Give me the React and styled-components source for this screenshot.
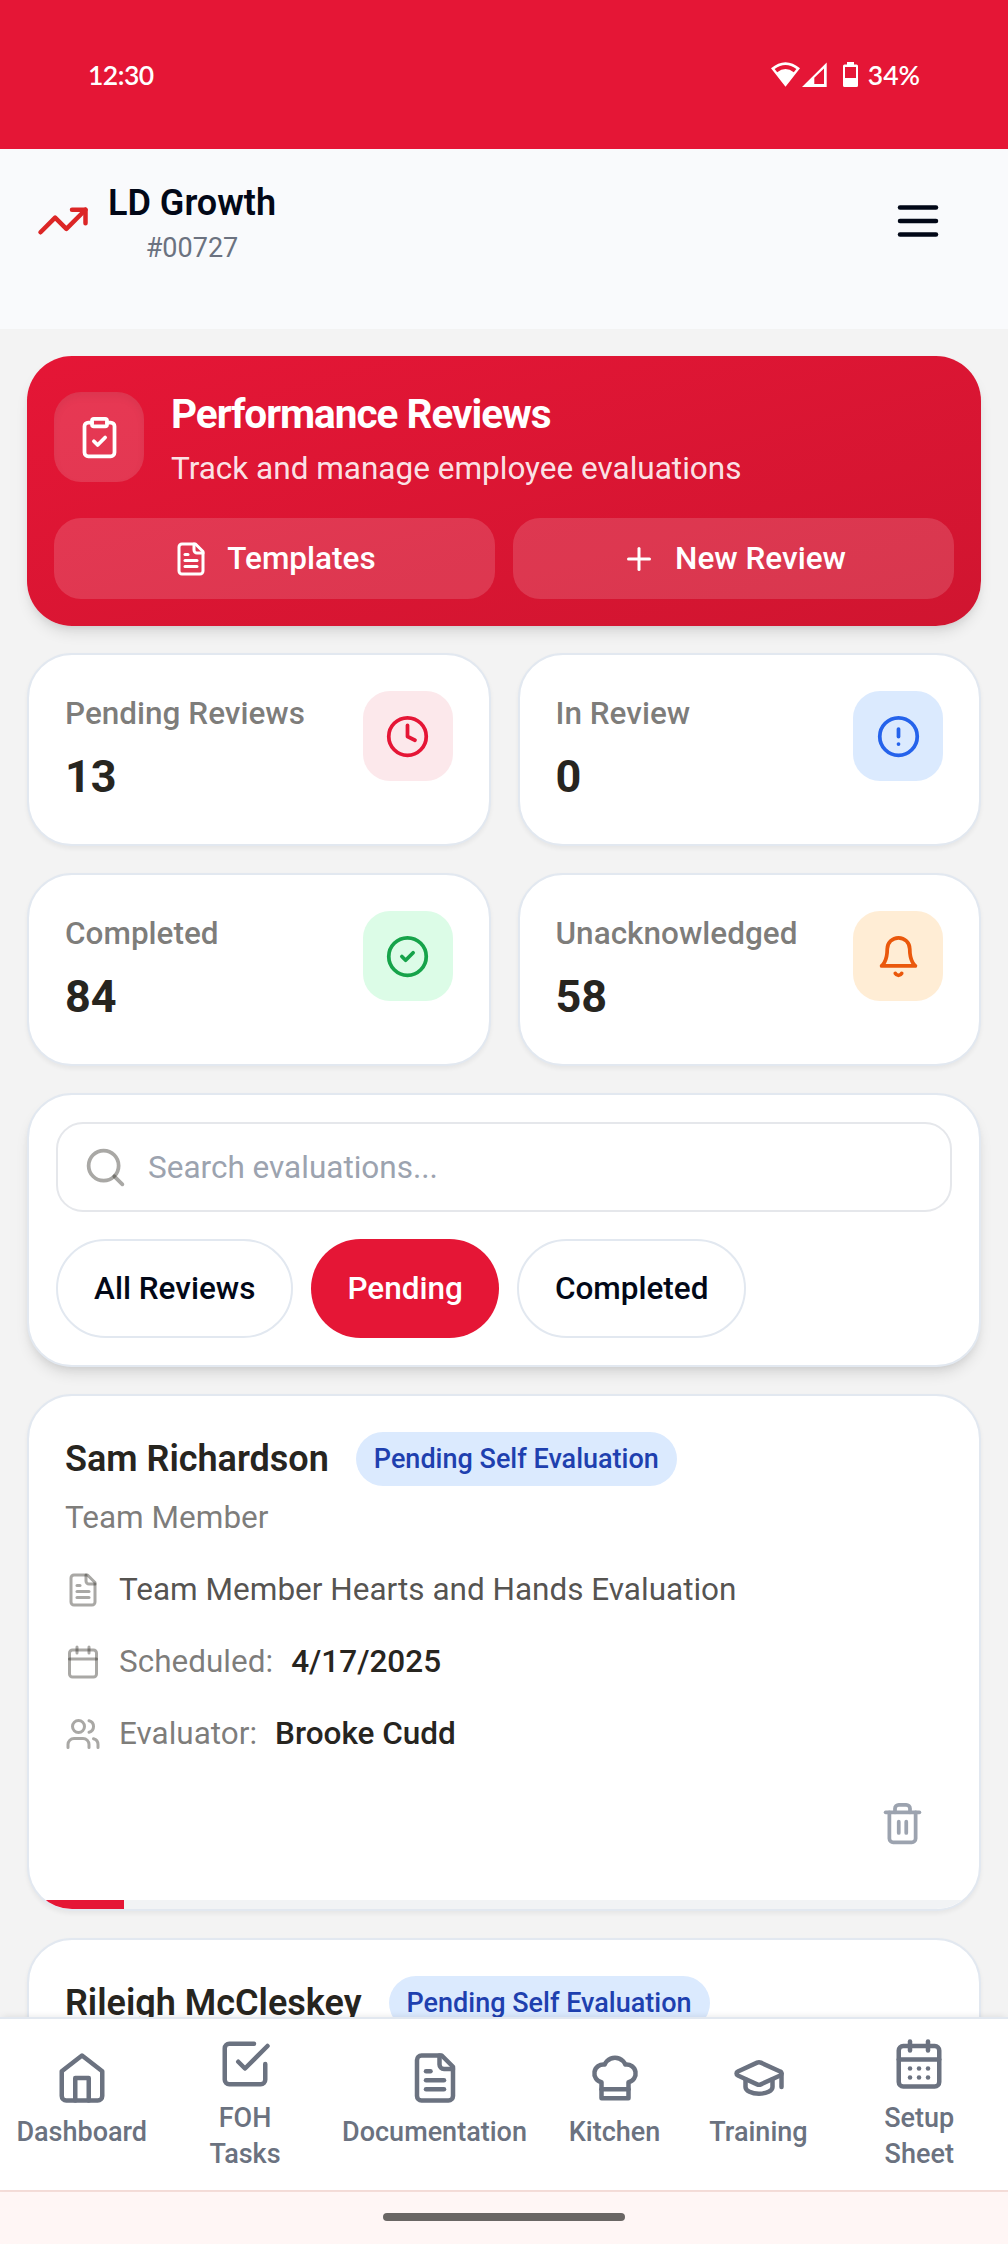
import React from "react";
import styled, { createGlobalStyle, css } from "styled-components";

const color = {
  brand: "#e51636",
  ink: "#27251f",
  ink80: "rgba(39, 37, 31, 0.8)",
  ink60: "rgba(39, 37, 31, 0.6)",
  ink40: "rgba(39, 37, 31, 0.4)",
  night: "#020817",
  line: "#e2e8f0",
  gray400: "#9ca3af",
  gray500: "#6b7280",
};

const GlobalStyle = createGlobalStyle`
  *, *::before, *::after { box-sizing: border-box; }
  html, body { margin: 0; padding: 0; }
  body {
    font-family: Roboto, "Liberation Sans", sans-serif;
    font-size: 31.5px;
    line-height: 45px;
    color: ${color.night};
    background: #f3f3f3;
  }
  button { font: inherit; color: inherit; background: none; border: 0; padding: 0; margin: 0; }
  h1, h2, h3, p { margin: 0; font: inherit; }
`;

/* ---------- icons ---------- */

const IconSvg = styled.svg`
  display: block;
  flex: none;
  width: ${(p) => p.$size}px;
  height: ${(p) => p.$size}px;
  fill: none;
  stroke: ${(p) => p.$stroke || "currentColor"};
  stroke-width: 2;
  stroke-linecap: round;
  stroke-linejoin: round;
`;

const shapes = {
  trending: (
    <>
      <polyline points="22 7 13.5 15.5 8.5 10.5 2 17" />
      <polyline points="16 7 22 7 22 13" />
    </>
  ),
  menu: (
    <>
      <path d="M4 6h16" />
      <path d="M4 12h16" />
      <path d="M4 18h16" />
    </>
  ),
  clipboardCheck: (
    <>
      <rect width="8" height="4" x="8" y="2" rx="1" />
      <path d="M16 4h2a2 2 0 0 1 2 2v14a2 2 0 0 1-2 2H6a2 2 0 0 1-2-2V6a2 2 0 0 1 2-2h2" />
      <path d="m9 14 2 2 4-4" />
    </>
  ),
  fileText: (
    <>
      <path d="M15 2H6a2 2 0 0 0-2 2v16a2 2 0 0 0 2 2h12a2 2 0 0 0 2-2V7Z" />
      <path d="M14 2v4a2 2 0 0 0 2 2h4" />
      <path d="M10 9H8" />
      <path d="M16 13H8" />
      <path d="M16 17H8" />
    </>
  ),
  plus: (
    <>
      <path d="M5 12h14" />
      <path d="M12 5v14" />
    </>
  ),
  clock: (
    <>
      <circle cx="12" cy="12" r="10" />
      <polyline points="12 6 12 12 16 14" />
    </>
  ),
  alert: (
    <>
      <circle cx="12" cy="12" r="10" />
      <path d="M12 8v4" />
      <path d="M12 16h.01" />
    </>
  ),
  circleCheck: (
    <>
      <circle cx="12" cy="12" r="10" />
      <path d="m9 12 2 2 4-4" />
    </>
  ),
  bell: (
    <>
      <path d="M6 8a6 6 0 0 1 12 0c0 7 3 9 3 9H3s3-2 3-9" />
      <path d="M10.3 21a1.94 1.94 0 0 0 3.4 0" />
    </>
  ),
  search: (
    <>
      <circle cx="11" cy="11" r="8" />
      <path d="m21 21-4.3-4.3" />
    </>
  ),
  calendar: (
    <>
      <path d="M8 2v4" />
      <path d="M16 2v4" />
      <rect width="18" height="18" x="3" y="4" rx="2" />
      <path d="M3 10h18" />
    </>
  ),
  calendarDays: (
    <>
      <path d="M8 2v4" />
      <path d="M16 2v4" />
      <rect width="18" height="18" x="3" y="4" rx="2" />
      <path d="M3 10h18" />
      <path d="M8 14h.01" />
      <path d="M12 14h.01" />
      <path d="M16 14h.01" />
      <path d="M8 18h.01" />
      <path d="M12 18h.01" />
      <path d="M16 18h.01" />
    </>
  ),
  users: (
    <>
      <path d="M16 21v-2a4 4 0 0 0-4-4H6a4 4 0 0 0-4 4v2" />
      <circle cx="9" cy="7" r="4" />
      <path d="M22 21v-2a4 4 0 0 0-3-3.87" />
      <path d="M16 3.13a4 4 0 0 1 0 7.75" />
    </>
  ),
  trash: (
    <>
      <path d="M3 6h18" />
      <path d="M19 6v14c0 1-1 2-2 2H7c-1 0-2-1-2-2V6" />
      <path d="M8 6V4c0-1 1-2 2-2h4c1 0 2 1 2 2v2" />
      <path d="M10 11v6" />
      <path d="M14 11v6" />
    </>
  ),
  home: (
    <>
      <path d="m3 9 9-7 9 7v11a2 2 0 0 1-2 2H5a2 2 0 0 1-2-2z" />
      <polyline points="9 22 9 12 15 12 15 22" />
    </>
  ),
  checkSquare: (
    <>
      <path d="m9 11 3 3L22 4" />
      <path d="M21 12v7a2 2 0 0 1-2 2H5a2 2 0 0 1-2-2V5a2 2 0 0 1 2-2h11" />
    </>
  ),
  chefHat: (
    <>
      <path d="M6 13.87A4 4 0 0 1 7.41 6a5.11 5.11 0 0 1 1.05-1.54 5 5 0 0 1 7.08 0A5.11 5.11 0 0 1 16.59 6 4 4 0 0 1 18 13.87V21H6Z" />
      <path d="M6 17h12" />
    </>
  ),
  gradCap: (
    <>
      <path d="M21.42 10.922a1 1 0 0 0-.019-1.838L12.83 5.18a2 2 0 0 0-1.66 0L2.6 9.08a1 1 0 0 0 0 1.832l8.57 3.908a2 2 0 0 0 1.66 0z" />
      <path d="M22 10v6" />
      <path d="M6 12.5V16a6 3 0 0 0 12 0v-3.5" />
    </>
  ),
};

const Icon = ({ name, size = 36, stroke }) => (
  <IconSvg viewBox="0 0 24 24" $size={size} $stroke={stroke} aria-hidden="true">
    {shapes[name]}
  </IconSvg>
);

/* ---------- shell ---------- */

const Screen = styled.div`
  display: flex;
  flex-direction: column;
  width: 1008px;
  height: 2244px;
  overflow: hidden;
`;

const StatusBar = styled.div`
  flex: none;
  display: flex;
  align-items: center;
  justify-content: space-between;
  height: 149px;
  padding: 0 88px;
  background: ${color.brand};
  color: #fff;
  font-family: Lato, Roboto, sans-serif;
  font-size: 26.5px;
  font-weight: 600;
  line-height: 36px;
`;

const Clock = styled.span`
  letter-spacing: -0.5px;
`;

const StatusIcons = styled.div`
  display: flex;
  align-items: center;
`;

const Glyph = styled.svg`
  display: block;
  fill: #fff;
  fill-rule: evenodd;
  margin-right: ${(p) => p.$gap}px;
`;

const Header = styled.header`
  flex: none;
  height: 180px;
  background: #f9fafc;
`;

const HeaderRow = styled.div`
  display: flex;
  align-items: center;
  justify-content: space-between;
  height: 144px;
  padding: 0 63px 0 36px;
`;

const Brand = styled.div`
  display: flex;
  align-items: center;
  gap: 18px;
`;

const BrandText = styled.div`
  display: flex;
  flex-direction: column;
  align-items: center;
`;

const BrandName = styled.h1`
  font-size: 36px;
  font-weight: 600;
  line-height: 54px;
`;

const StoreNumber = styled.span`
  font-size: 27px;
  line-height: 36px;
  color: ${color.gray500};
`;

const Content = styled.main`
  flex: 1;
  min-height: 0;
  overflow: hidden;
  display: flex;
  flex-direction: column;
  gap: 27px;
  padding: 27px 27px 0;
  background: #f3f3f3;
`;

/* ---------- hero ---------- */

const mediumShadow = css`
  box-shadow: 0 9px 13.5px -2.25px rgba(0, 0, 0, 0.1), 0 4.5px 9px -4.5px rgba(0, 0, 0, 0.1);
`;

const Hero = styled.section`
  flex: none;
  display: flex;
  flex-direction: column;
  gap: 27px;
  padding: 27px;
  border-radius: 45px;
  background: linear-gradient(to bottom right, ${color.brand}, #d01530);
  color: #fff;
  ${mediumShadow}
`;

const HeroTop = styled.div`
  display: flex;
  align-items: center;
  gap: 27px;
`;

const Tile = styled.div`
  flex: none;
  display: flex;
  align-items: center;
  justify-content: center;
  width: 90px;
  height: 90px;
  border-radius: 27px;
  background: ${(p) => p.$bg};
  color: ${(p) => p.$fg};
`;

const HeroTile = styled(Tile)`
  box-shadow: inset 0 4.5px 9px rgba(0, 0, 0, 0.05);
`;

const HeroTitle = styled.h2`
  font-size: 40.5px;
  font-weight: 700;
  line-height: 63px;
  letter-spacing: -0.025em;
`;

const HeroText = styled.p`
  color: rgba(255, 255, 255, 0.9);
`;

const HeroActions = styled.div`
  display: grid;
  grid-template-columns: 1fr 1fr;
  gap: 18px;
`;

const HeroButton = styled.button`
  display: flex;
  align-items: center;
  justify-content: center;
  gap: 18px;
  height: 81px;
  border-radius: 27px;
  background: rgba(255, 255, 255, 0.15);
  font-weight: 500;
`;

/* ---------- stats ---------- */

const Card = styled.section`
  flex: none;
  background: #fff;
  border: 2px solid ${color.line};
  border-radius: 45px;
  box-shadow: 0 2.25px 4.5px rgba(0, 0, 0, 0.05);
`;

const Stats = styled.div`
  flex: none;
  display: grid;
  grid-template-columns: 1fr 1fr;
  gap: 27px;
`;

const StatCard = styled(Card)`
  display: flex;
  align-items: flex-start;
  justify-content: space-between;
  padding: 36px;
`;

const StatText = styled.div`
  display: flex;
  flex-direction: column;
  gap: 9px;
`;

const StatLabel = styled.span`
  font-weight: 500;
  color: ${color.ink60};
`;

const StatValue = styled.span`
  font-size: 45px;
  line-height: 63px;
  font-weight: 700;
  color: ${color.ink};
`;

/* ---------- search ---------- */

const SearchCard = styled(Card)`
  display: flex;
  flex-direction: column;
  gap: 27px;
  padding: 27px;
  ${mediumShadow}
`;

const SearchField = styled.label`
  display: flex;
  align-items: center;
  gap: 20px;
  height: 90px;
  padding: 0 25px;
  border: 2px solid #e5e7eb;
  border-radius: 27px;
`;

const SearchInput = styled.input`
  flex: 1;
  min-width: 0;
  padding: 0;
  border: 0;
  outline: 0;
  background: none;
  font: inherit;
  color: ${color.ink};
  &::placeholder {
    color: ${color.gray400};
    opacity: 1;
  }
`;

const Chips = styled.div`
  display: flex;
  gap: 18px;
`;

const Chip = styled.button`
  height: 99px;
  padding: 0 36px;
  border: ${(p) => (p.$active ? "0" : `2px solid ${color.line}`)};
  border-radius: 50px;
  background: ${(p) => (p.$active ? color.brand : "#fff")};
  color: ${(p) => (p.$active ? "#fff" : color.night)};
  font-weight: 500;
`;

/* ---------- reviews ---------- */

const ReviewCard = styled(Card)`
  overflow: hidden;
`;

const ReviewBody = styled.div`
  display: flex;
  flex-direction: column;
  gap: 27px;
  padding: 36px;
`;

const ReviewHead = styled.div`
  display: flex;
  flex-direction: column;
  gap: 9px;
`;

const NameRow = styled.div`
  display: flex;
  align-items: center;
  gap: 27px;
`;

const PersonName = styled.h3`
  font-size: 36px;
  line-height: 54px;
  font-weight: 600;
  color: ${color.ink};
`;

const Badge = styled.span`
  padding: 9px 18px;
  border-radius: 27px;
  background: #dbeafe;
  color: #1e40af;
  font-size: 27px;
  line-height: 36px;
  font-weight: 500;
`;

const Role = styled.p`
  color: ${color.ink60};
`;

const Detail = styled.div`
  display: flex;
  align-items: center;
  gap: 18px;
  color: ${(p) => (p.$strong ? color.ink80 : color.ink60)};
`;

const DetailValue = styled.span`
  font-weight: 500;
  color: ${color.ink};
`;

const CardActions = styled.div`
  display: flex;
  justify-content: flex-end;
`;

const IconButton = styled.button`
  padding: 18px;
  color: ${color.gray400};
`;

const Track = styled.div`
  height: 9px;
  background: #f1f3f5;
`;

const Fill = styled.div`
  height: 100%;
  background: ${color.brand};
`;

/* ---------- bottom ---------- */

const Nav = styled.nav`
  flex: none;
  position: relative;
  display: grid;
  grid-template-columns: 163.5fr 163fr 216fr 144fr 144fr 177.5fr;
  height: 173px;
  border-top: 2px solid ${color.line};
  background: #fff;
  box-shadow: 0 -2px 7px -2px rgba(0, 0, 0, 0.1);
`;

const NavItem = styled.button`
  display: flex;
  flex-direction: column;
  align-items: center;
  justify-content: center;
  gap: 9px;
  padding-bottom: ${(p) => (p.$wrap ? 0 : 8)}px;
  color: ${color.gray500};
  font-size: 27px;
  line-height: 36px;
  font-weight: 500;
`;

const NavLabel = styled.span`
  width: min-content;
`;

const GestureBar = styled.div`
  flex: none;
  display: flex;
  justify-content: center;
  height: 54px;
  padding-top: 21px;
  border-top: 2px solid #f5ddd9;
  background: #fff6f5;
`;

const GestureHandle = styled.div`
  width: 242px;
  height: 8px;
  border-radius: 4px;
  background: #6a6664;
`;

/* ---------- data ---------- */

const stats = [
  { label: "Pending Reviews", value: 13, icon: "clock", bg: "#fce8eb", fg: color.brand },
  { label: "In Review", value: 0, icon: "alert", bg: "#dbeafe", fg: "#2563eb" },
  { label: "Completed", value: 84, icon: "circleCheck", bg: "#dcfce7", fg: "#16a34a" },
  { label: "Unacknowledged", value: 58, icon: "bell", bg: "#ffedd5", fg: "#ea580c" },
];

const filters = ["All Reviews", "Pending", "Completed"];

const reviews = [
  {
    name: "Sam Richardson",
    status: "Pending Self Evaluation",
    role: "Team Member",
    form: "Team Member Hearts and Hands Evaluation",
    date: "4/17/2025",
    evaluator: "Brooke Cudd",
    progress: 10,
  },
  { name: "Rileigh McCleskey", status: "Pending Self Evaluation" },
];

const navItems = [
  { label: "Dashboard", icon: "home" },
  { label: "FOH Tasks", icon: "checkSquare", wrap: true },
  { label: "Documentation", icon: "fileText" },
  { label: "Kitchen", icon: "chefHat" },
  { label: "Training", icon: "gradCap" },
  { label: "Setup Sheet", icon: "calendarDays", wrap: true },
];

const Review = ({ review }) => (
  <ReviewCard>
    <ReviewBody>
      <ReviewHead>
        <NameRow>
          <PersonName>{review.name}</PersonName>
          <Badge>{review.status}</Badge>
        </NameRow>
        {review.role && <Role>{review.role}</Role>}
      </ReviewHead>
      {review.form && (
        <>
          <Detail $strong>
            <Icon name="fileText" stroke={color.ink40} />
            <span>{review.form}</span>
          </Detail>
          <Detail>
            <Icon name="calendar" stroke={color.ink40} />
            <span>Scheduled:</span>
            <DetailValue>{review.date}</DetailValue>
          </Detail>
          <Detail>
            <Icon name="users" stroke={color.ink40} />
            <span>Evaluator:</span>
            <DetailValue>{review.evaluator}</DetailValue>
          </Detail>
          <CardActions>
            <IconButton aria-label="Delete">
              <Icon name="trash" size={45} />
            </IconButton>
          </CardActions>
        </>
      )}
    </ReviewBody>
    {review.progress && (
      <Track>
        <Fill style={{ width: `${review.progress}%` }} />
      </Track>
    )}
  </ReviewCard>
);

export default function App() {
  return (
    <>
      <GlobalStyle />
      <Screen>
        <StatusBar>
          <Clock>12:30</Clock>
          <StatusIcons>
            <Glyph width="29" height="25" viewBox="0 0 29 25" $gap={2.5}>
              <path d="M0 6.3Q14.5-5.8 29 6.3L14.5 24.8ZM3.6 7L6.2 10.2Q14.5 4 22.8 10.2L25.4 7Q14.5-1 3.6 7Z" />
            </Glyph>
            <Glyph width="25" height="25" viewBox="0 0 25 25" $gap={15.5}>
              <path d="M0 25L24.7 .5V25ZM12.3 22V15.8L22 6.4V22Z" />
            </Glyph>
            <Glyph width="15" height="25" viewBox="0 0 15 25" $gap={10}>
              <path d="M4 0H11V2.6H13.5Q15 2.6 15 4.1V23.5Q15 25 13.5 25H1.5Q0 25 0 23.5V4.1Q0 2.6 1.5 2.6H4ZM2 5V16H13V5Z" />
            </Glyph>
            <span>34%</span>
          </StatusIcons>
        </StatusBar>

        <Header>
          <HeaderRow>
            <Brand>
              <Icon name="trending" size={54} stroke="#dc2626" />
              <BrandText>
                <BrandName>LD Growth</BrandName>
                <StoreNumber>#00727</StoreNumber>
              </BrandText>
            </Brand>
            <button aria-label="Menu">
              <Icon name="menu" size={54} />
            </button>
          </HeaderRow>
        </Header>

        <Content>
          <Hero>
            <HeroTop>
              <HeroTile $bg="rgba(255, 255, 255, 0.15)" $fg="#fff">
                <Icon name="clipboardCheck" size={45} />
              </HeroTile>
              <div>
                <HeroTitle>Performance Reviews</HeroTitle>
                <HeroText>Track and manage employee evaluations</HeroText>
              </div>
            </HeroTop>
            <HeroActions>
              <HeroButton>
                <Icon name="fileText" />
                Templates
              </HeroButton>
              <HeroButton>
                <Icon name="plus" />
                New Review
              </HeroButton>
            </HeroActions>
          </Hero>

          <Stats>
            {stats.map((s) => (
              <StatCard key={s.label}>
                <StatText>
                  <StatLabel>{s.label}</StatLabel>
                  <StatValue>{s.value}</StatValue>
                </StatText>
                <Tile $bg={s.bg} $fg={s.fg}>
                  <Icon name={s.icon} size={45} />
                </Tile>
              </StatCard>
            ))}
          </Stats>

          <SearchCard>
            <SearchField>
              <Icon name="search" size={45} stroke={color.ink40} />
              <SearchInput placeholder="Search evaluations..." />
            </SearchField>
            <Chips>
              {filters.map((f) => (
                <Chip key={f} $active={f === "Pending"}>
                  {f}
                </Chip>
              ))}
            </Chips>
          </SearchCard>

          {reviews.map((r) => (
            <Review key={r.name} review={r} />
          ))}
        </Content>

        <Nav>
          {navItems.map((n) => (
            <NavItem key={n.label} $wrap={n.wrap}>
              <Icon name={n.icon} size={54} />
              <NavLabel>{n.label}</NavLabel>
            </NavItem>
          ))}
        </Nav>
        <GestureBar>
          <GestureHandle />
        </GestureBar>
      </Screen>
    </>
  );
}
